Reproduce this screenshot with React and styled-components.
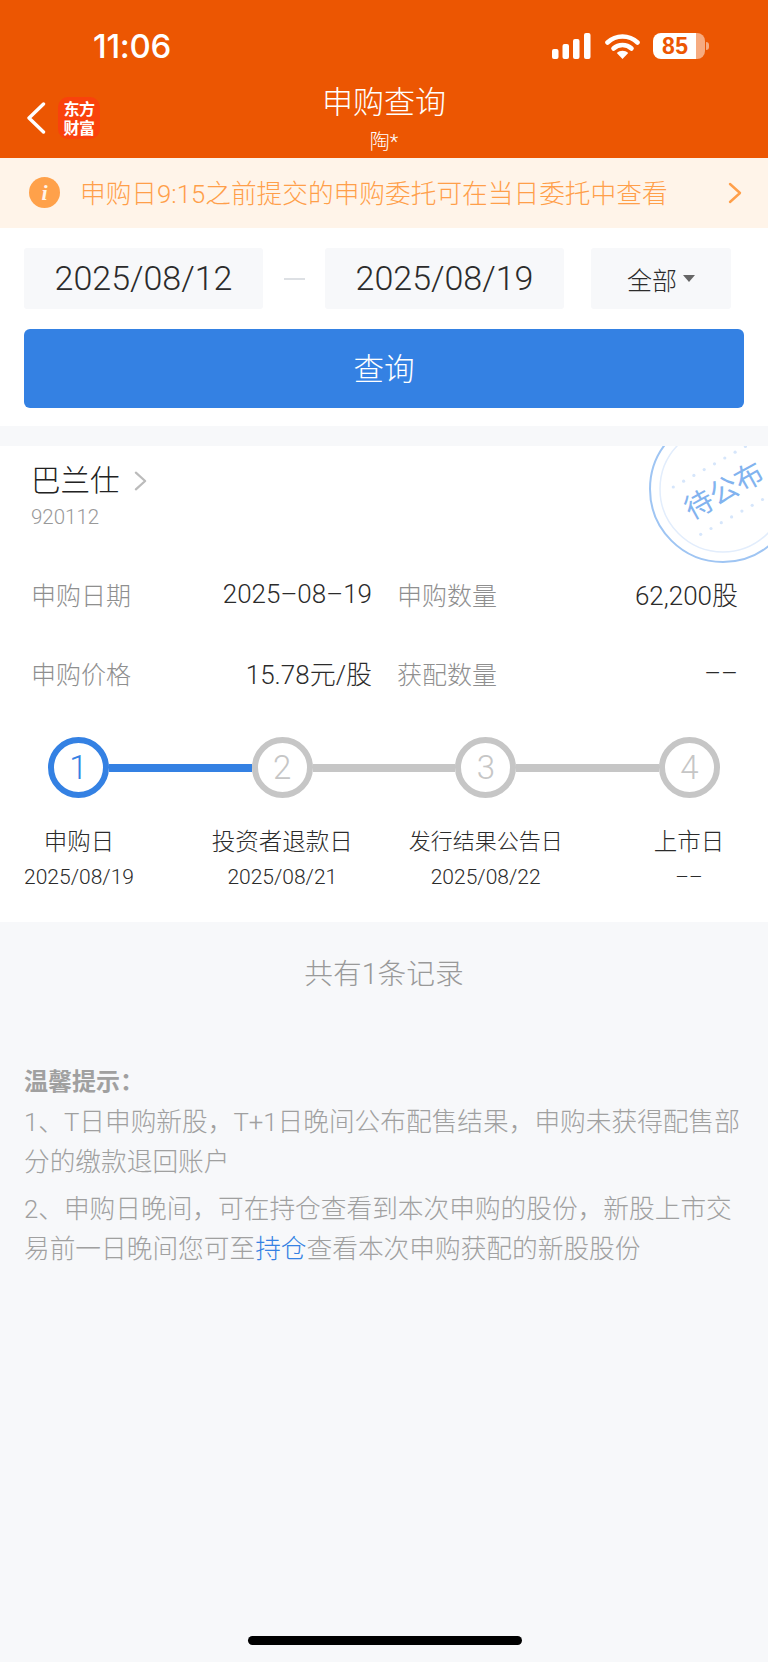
import React from 'react'
import styled, { createGlobalStyle } from 'styled-components'

const FONT = `Roboto, "Noto Sans CJK SC", sans-serif`

const GlobalStyle = createGlobalStyle`
  html, body {
    margin: 0;
    padding: 0;
    background: #f7f8fa;
    font-family: ${FONT};
  }
  * { box-sizing: border-box; }
`

const Page = styled.div`
  position: relative;
  width: 768px;
  height: 1662px;
  overflow: hidden;
  background: #f7f8fa;
  display: flex;
  flex-direction: column;
`

const Head = styled.header`
  height: 158px;
  flex: none;
  background: #ec5602;
  color: #fff;
  display: flex;
  flex-direction: column;
`

const StatusBar = styled.div`
  height: 84px;
  flex: none;
  padding: 26px 63px 0 93px;
  display: flex;
  justify-content: space-between;
  align-items: flex-start;
`

const Clock = styled.div`
  font-family: Inter, "Liberation Sans", sans-serif;
  font-size: 33px;
  line-height: 40px;
  font-weight: 500;
  letter-spacing: -0.3px;
`

const StatusIcons = styled.div`
  display: flex;
  align-items: center;
  height: 40px;
`

const Battery = styled.div`
  position: relative;
  width: 52px;
  height: 26px;
  margin-left: 13px;
  border-radius: 8px;
  background: linear-gradient(90deg, #fff 0 43px, #f6ab80 43px);
  color: #ec5602;
  font-family: "Liberation Sans", sans-serif;
  font-size: 23px;
  font-weight: 700;
  line-height: 26px;
  padding-left: 9px;
  letter-spacing: 0.5px;
  &::after {
    content: '';
    position: absolute;
    right: -4px;
    top: 9px;
    width: 3px;
    height: 8px;
    border-radius: 0 3px 3px 0;
    background: #f6ab80;
  }
`

const NavBar = styled.div`
  flex: 1;
  display: flex;
  align-items: flex-start;
  justify-content: space-between;
`

const NavLeft = styled.div`
  width: 200px;
  padding: 13px 0 0 26px;
  display: flex;
  align-items: center;
  gap: 12px;
`

const AppLogo = styled.div`
  width: 42px;
  height: 42px;
  flex: none;
  border-radius: 10px;
  background: #f9420c;
  color: #fff;
  font-family: "Noto Sans CJK SC", sans-serif;
  font-size: 16px;
  line-height: 19px;
  font-weight: 700;
  text-align: center;
  letter-spacing: -0.5px;
  padding-top: 2px;
`

const NavTitle = styled.div`
  text-align: center;
`

const TitleMain = styled.div`
  font-size: 31px;
  line-height: 38px;
  font-weight: 300;
`

const TitleSub = styled.div`
  font-size: 20px;
  line-height: 24px;
  margin-top: 8px;
  font-weight: 300;
`

const NavSpacer = styled.div`
  width: 200px;
`

const Notice = styled.div`
  height: 70px;
  flex: none;
  background: #fff4e9;
  color: #ff9f4a;
  display: flex;
  align-items: center;
  padding: 0 26px 0 29px;
  font-size: 25.7px;
  font-weight: 300;
`

const NoticeIcon = styled.div`
  width: 31px;
  height: 31px;
  flex: none;
  border-radius: 50%;
  background: #ffa14a;
  color: #fff4e9;
  font-family: "Liberation Serif", serif;
  font-style: italic;
  font-weight: 700;
  font-size: 22px;
  line-height: 31px;
  text-align: center;
  margin-right: 20px;
  margin-bottom: 2px;
`

const NoticeText = styled.div`
  flex: 1;
  padding-bottom: 3px;
`

const Filter = styled.section`
  height: 198px;
  flex: none;
  background: #fff;
  padding: 20px 24px 0;
`

const FilterRow = styled.div`
  display: flex;
  align-items: center;
`

const DateBox = styled.div`
  width: 239px;
  height: 61px;
  border-radius: 3px;
  background: #f7f8fa;
  color: #2b2b2b;
  font-size: 34px;
  font-weight: 300;
  line-height: 61px;
  text-align: center;
`

const Dash = styled.div`
  width: 21px;
  height: 2px;
  margin: 0 20px 0 21px;
  background: #dde0e4;
`

const Select = styled.div`
  width: 140px;
  height: 61px;
  margin-left: 27px;
  border-radius: 3px;
  background: #f7f8fa;
  color: #2b2b2b;
  font-size: 25px;
  font-weight: 300;
  display: flex;
  align-items: center;
  justify-content: center;
  gap: 6px;
`

const Caret = styled.span`
  width: 0;
  height: 0;
  border-left: 6px solid transparent;
  border-right: 6px solid transparent;
  border-top: 7px solid #666;
`

const QueryButton = styled.button`
  display: block;
  width: 720px;
  height: 79px;
  margin-top: 20px;
  padding: 0 0 4px;
  border: none;
  border-radius: 6px;
  background: #3481e3;
  color: #fff;
  font-family: inherit;
  font-size: 30.5px;
  font-weight: 300;
`

const Card = styled.section`
  position: relative;
  height: 476px;
  flex: none;
  margin-top: 20px;
  background: #fff;
  overflow: hidden;
  padding: 17px 31px 0;
`

const Stamp = styled.div`
  position: absolute;
  left: 649px;
  top: -31px;
  width: 148px;
  height: 148px;
  border-radius: 50%;
  border: 2px solid #9fc5f3;
  display: flex;
  align-items: center;
  justify-content: center;
`

const StampDots = styled.svg`
  position: absolute;
  left: 0;
  top: 0;
`

const StampText = styled.span`
  position: relative;
  top: -1px;
  color: #82b3ef;
  font-size: 28.5px;
  font-weight: 400;
  transform: rotate(-29deg);
  white-space: nowrap;
`

const StockName = styled.div`
  display: flex;
  align-items: center;
  gap: 14px;
  font-size: 29.5px;
  line-height: 36px;
  color: #222;
  font-weight: 300;
`

const StockCode = styled.div`
  margin-top: 6px;
  font-size: 20.5px;
  line-height: 24px;
  color: #999;
  font-weight: 300;
`

const InfoGrid = styled.div`
  display: grid;
  grid-template-columns: 341px 341px;
  column-gap: 25px;
  row-gap: 48px;
  margin-top: 49px;
`

const InfoCell = styled.div`
  display: flex;
  justify-content: space-between;
  align-items: center;
  height: 31px;
  font-weight: 300;
`

const InfoLabel = styled.span`
  color: #8f8f8f;
  font-size: 25px;
`

const InfoValue = styled.span`
  color: #2b2b2b;
  font-size: 26px;
`

const Track = styled.div`
  display: flex;
  align-items: center;
  margin: 49px 17px 0;
`

const Dot = styled.div`
  width: 61px;
  height: 61px;
  flex: none;
  border-radius: 50%;
  border: 6px solid ${(p) => (p.$active ? '#3481e3' : '#c6c6c6')};
  color: ${(p) => (p.$active ? '#3481e3' : '#c6c6c6')};
  background: #fff;
  display: flex;
  align-items: center;
  justify-content: center;
  font-size: 33px;
  font-weight: 300;
`

const Connector = styled.div`
  flex: 1;
  height: 8px;
  background: ${(p) => (p.$active ? '#3481e3' : '#c6c6c6')};
`

const StepLabels = styled.div`
  display: flex;
  justify-content: space-between;
  margin: 26px -12px 0;
`

const StepLabel = styled.div`
  width: 120px;
  display: flex;
  flex-direction: column;
  align-items: center;
  white-space: nowrap;
  color: #2b2b2b;
  font-weight: 300;
`

const StepName = styled.div`
  height: 36px;
  line-height: 36px;
  font-size: ${(p) => (p.$small ? '22px' : '23.5px')};
`

const StepDate = styled.div`
  font-size: 21px;
  line-height: 34px;
`

const Total = styled.div`
  margin-top: 34px;
  text-align: center;
  color: #999;
  font-size: 28.7px;
  line-height: 36px;
  font-weight: 300;
`

const Tips = styled.div`
  margin-top: 72px;
  padding: 0 24px;
  color: #a0a0a0;
  font-size: 25.7px;
  line-height: 39.5px;
  font-weight: 300;
`

const TipsTitle = styled.div`
  font-size: 24px;
  font-weight: 700;
  line-height: 36px;
  margin-bottom: 3px;
`

const TipLine = styled.p`
  margin: 0 0 8px;
`

const TipLink = styled.span`
  color: #3481e3;
`

const HomeBar = styled.div`
  position: absolute;
  left: 248px;
  bottom: 17px;
  width: 274px;
  height: 9px;
  border-radius: 5px;
  background: #000;
`

const steps = [
  { name: '申购日', date: '2025/08/19' },
  { name: '投资者退款日', date: '2025/08/21' },
  { name: '发行结果公告日', date: '2025/08/22', small: true },
  { name: '上市日', date: '––' },
]

const StatusSignal = () => (
  <svg width="39" height="26" viewBox="0 0 39 26" fill="#fff">
    <rect x="0" y="16" width="6.5" height="10" rx="2" />
    <rect x="10.5" y="11" width="6.5" height="15" rx="2" />
    <rect x="21" y="6" width="6.5" height="20" rx="2" />
    <rect x="32" y="0" width="6.5" height="26" rx="2" />
  </svg>
)

const StatusWifi = () => (
  <svg width="35" height="26" viewBox="0 0 35 26" fill="none" style={{ marginLeft: 14 }}>
    <path d="M2.5 9.5C11 1.5 24 1.5 32.5 9.5" stroke="#fff" strokeWidth="4.6" strokeLinecap="round" />
    <path d="M8.5 15.5C13.5 10.8 21.5 10.8 26.5 15.5" stroke="#fff" strokeWidth="4.6" strokeLinecap="round" />
    <path d="M17.5 26L11.8 20C15 17 20 17 23.2 20Z" fill="#fff" />
  </svg>
)

const BackArrow = () => (
  <svg width="20" height="32" viewBox="0 0 20 32" fill="none">
    <path d="M17.5 2L3 16L17.5 30" stroke="#fff" strokeWidth="3.4" strokeLinecap="round" strokeLinejoin="round" />
  </svg>
)

const Chevron = ({ color, w, h }) => (
  <svg width={w} height={h} viewBox="0 0 14 22" fill="none">
    <path d="M2 2L12 11L2 20" stroke={color} strokeWidth="2.4" strokeLinecap="round" strokeLinejoin="round" />
  </svg>
)

// two dotted rows running along the stamp's tilted text
const stampRows = [
  { x: 22.3, y: 70, count: 8 },
  { x: 49.7, y: 117.3, count: 7 },
]
const stampDots = stampRows.flatMap((row, r) =>
  Array.from({ length: row.count }, (_, i) => (
    <circle key={`${r}-${i}`} cx={row.x + i * 10.3} cy={row.y - i * 5.8} r="1.6" fill="#d6e6fb" />
  ))
)

export default function App() {
  return (
    <Page>
      <GlobalStyle />
      <Head>
        <StatusBar>
          <Clock>11:06</Clock>
          <StatusIcons>
            <StatusSignal />
            <StatusWifi />
            <Battery>85</Battery>
          </StatusIcons>
        </StatusBar>
        <NavBar>
          <NavLeft>
            <BackArrow />
            <AppLogo>东方<br />财富</AppLogo>
          </NavLeft>
          <NavTitle>
            <TitleMain>申购查询</TitleMain>
            <TitleSub>陶*</TitleSub>
          </NavTitle>
          <NavSpacer />
        </NavBar>
      </Head>

      <Notice>
        <NoticeIcon>i</NoticeIcon>
        <NoticeText>申购日9:15之前提交的申购委托可在当日委托中查看</NoticeText>
        <Chevron color="#ff9f4a" w={14} h={22} />
      </Notice>

      <Filter>
        <FilterRow>
          <DateBox>2025/08/12</DateBox>
          <Dash />
          <DateBox>2025/08/19</DateBox>
          <Select>全部<Caret /></Select>
        </FilterRow>
        <QueryButton>查询</QueryButton>
      </Filter>

      <Card>
        <Stamp>
          <StampDots width="144" height="144" viewBox="0 0 144 144" fill="none">
            <circle cx="72" cy="72" r="63" stroke="#e2edfc" strokeWidth="1.5" />
            {stampDots}
          </StampDots>
          <StampText>待公布</StampText>
        </Stamp>
        <StockName>
          巴兰仕
          <Chevron color="#bbb" w={13} h={22} />
        </StockName>
        <StockCode>920112</StockCode>
        <InfoGrid>
          <InfoCell><InfoLabel>申购日期</InfoLabel><InfoValue>2025–08–19</InfoValue></InfoCell>
          <InfoCell><InfoLabel>申购数量</InfoLabel><InfoValue>62,200股</InfoValue></InfoCell>
          <InfoCell><InfoLabel>申购价格</InfoLabel><InfoValue>15.78元/股</InfoValue></InfoCell>
          <InfoCell><InfoLabel>获配数量</InfoLabel><InfoValue>––</InfoValue></InfoCell>
        </InfoGrid>
        <Track>
          <Dot $active>1</Dot>
          <Connector $active />
          <Dot>2</Dot>
          <Connector />
          <Dot>3</Dot>
          <Connector />
          <Dot>4</Dot>
        </Track>
        <StepLabels>
          {steps.map((s) => (
            <StepLabel key={s.name}>
              <StepName $small={s.small}>{s.name}</StepName>
              <StepDate>{s.date}</StepDate>
            </StepLabel>
          ))}
        </StepLabels>
      </Card>

      <Total>共有1条记录</Total>

      <Tips>
        <TipsTitle>温馨提示：</TipsTitle>
        <TipLine>1、T日申购新股，T+1日晚间公布配售结果，申购未获得配售部分的缴款退回账户</TipLine>
        <TipLine>2、申购日晚间，可在持仓查看到本次申购的股份，新股上市交易前一日晚间您可至<TipLink>持仓</TipLink>查看本次申购获配的新股股份</TipLine>
      </Tips>

      <HomeBar />
    </Page>
  )
}
